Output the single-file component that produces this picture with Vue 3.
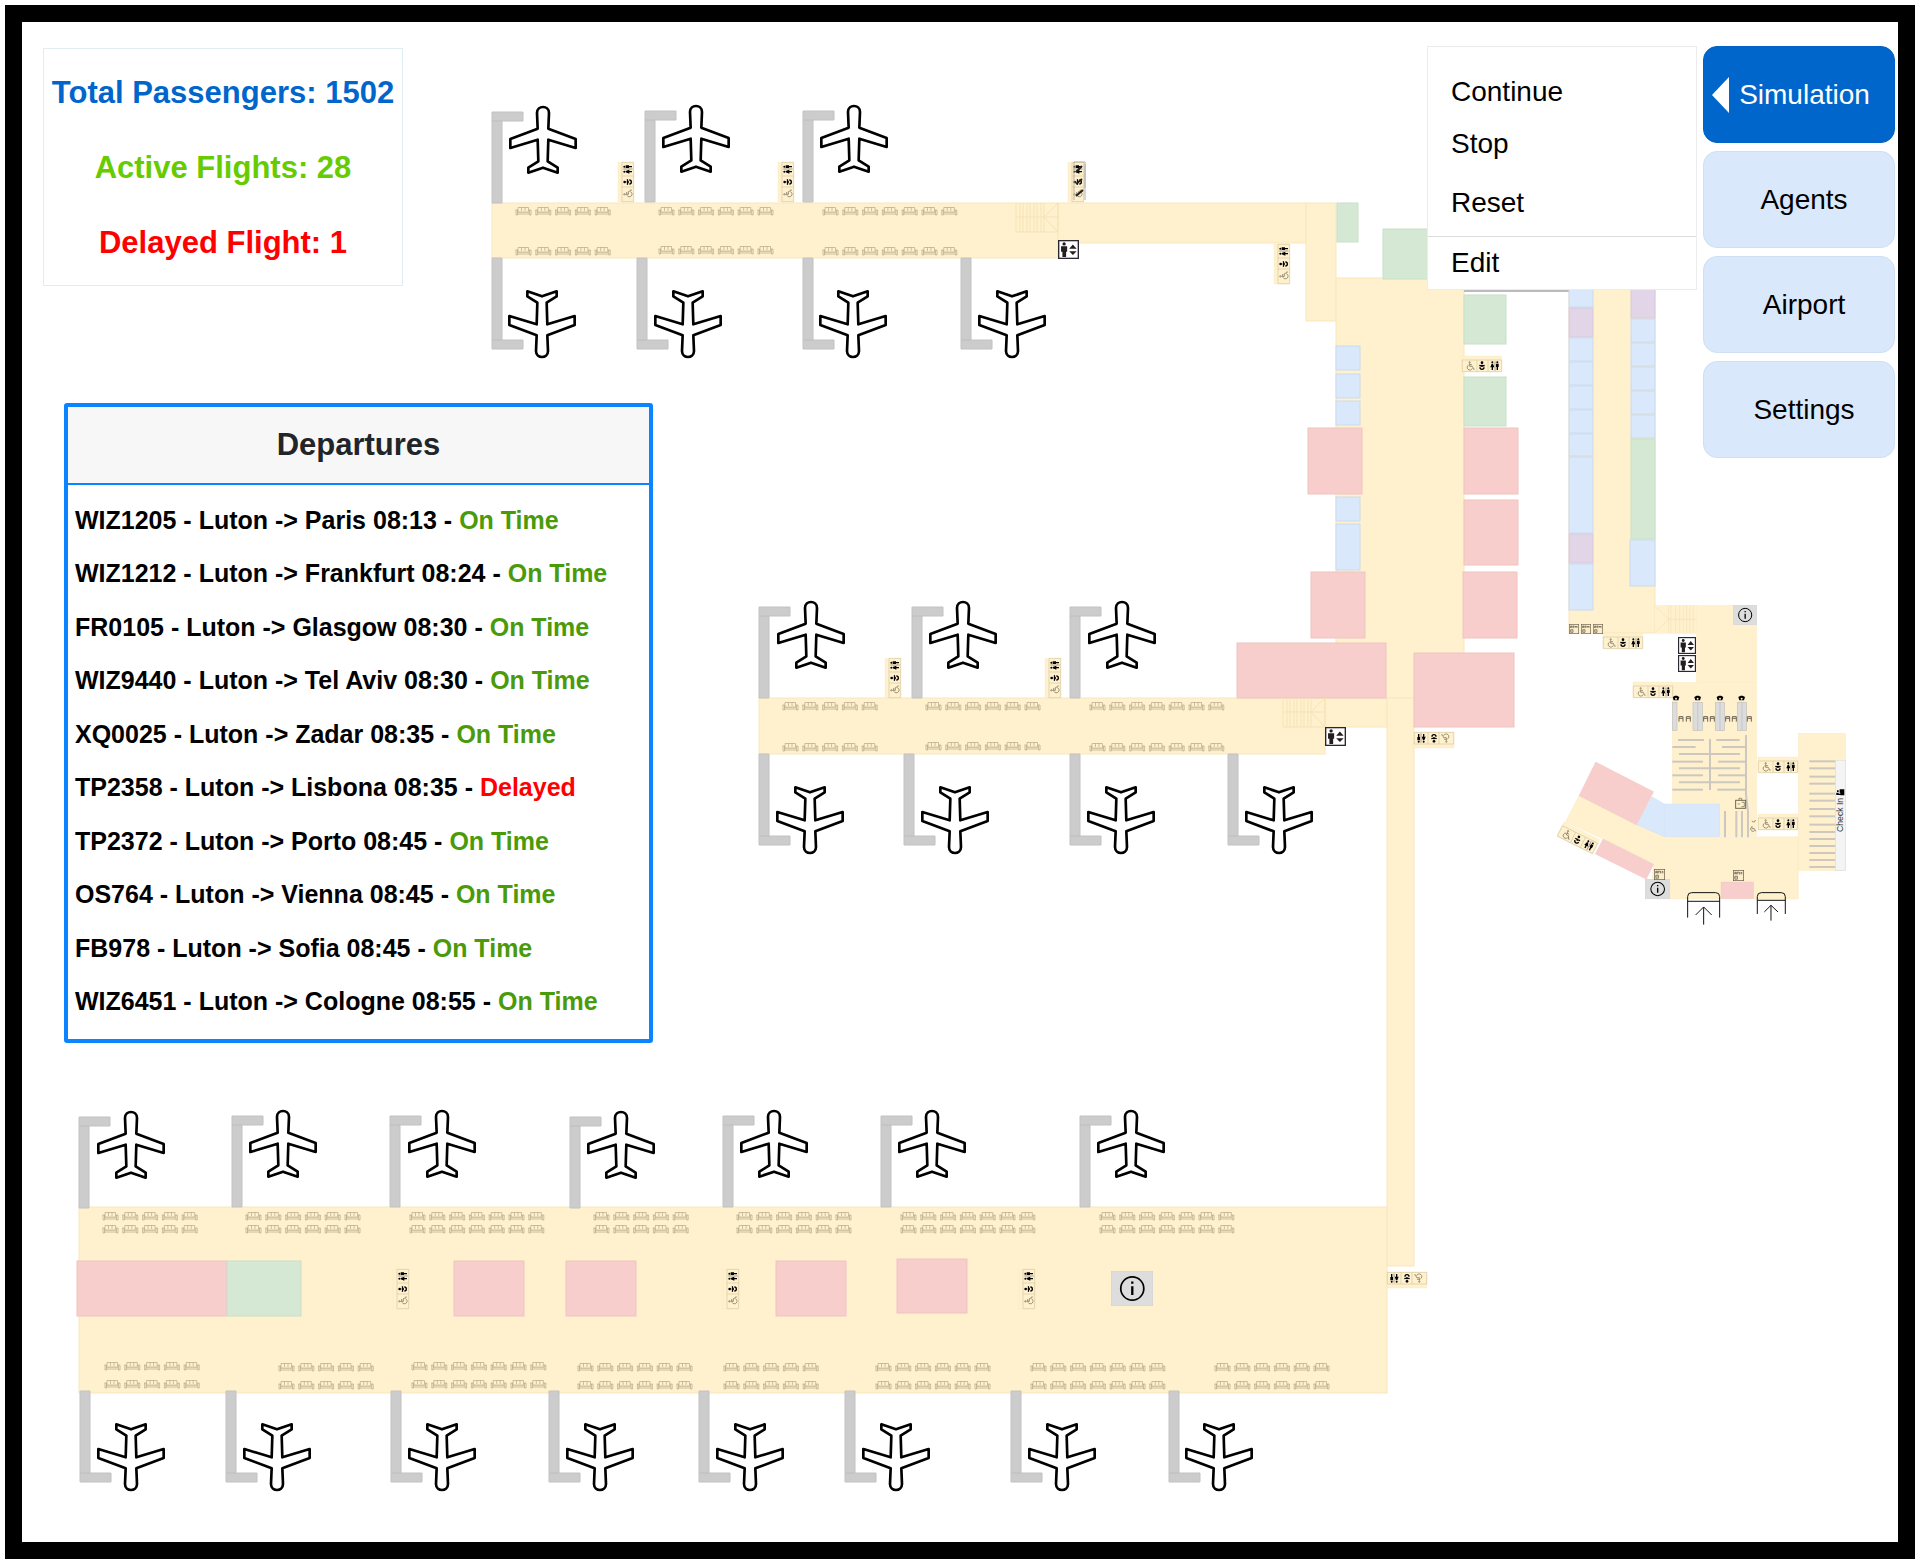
<script setup>
import { ref } from 'vue'

const stats = [
  { text: 'Total Passengers: 1502', tone: 'blue' },
  { text: 'Active Flights: 28', tone: 'green' },
  { text: 'Delayed Flight: 1', tone: 'red' },
]

const departures = [
  { code: 'WIZ1205', to: 'Paris', time: '08:13', status: 'On Time' },
  { code: 'WIZ1212', to: 'Frankfurt', time: '08:24', status: 'On Time' },
  { code: 'FR0105', to: 'Glasgow', time: '08:30', status: 'On Time' },
  { code: 'WIZ9440', to: 'Tel Aviv', time: '08:30', status: 'On Time' },
  { code: 'XQ0025', to: 'Zadar', time: '08:35', status: 'On Time' },
  { code: 'TP2358', to: 'Lisbona', time: '08:35', status: 'Delayed' },
  { code: 'TP2372', to: 'Porto', time: '08:45', status: 'On Time' },
  { code: 'OS764', to: 'Vienna', time: '08:45', status: 'On Time' },
  { code: 'FB978', to: 'Sofia', time: '08:45', status: 'On Time' },
  { code: 'WIZ6451', to: 'Cologne', time: '08:55', status: 'On Time' },
]

const sections = ['Simulation', 'Agents', 'Airport', 'Settings']
const active = ref('Simulation')

// Floor plan. Rectangles are [x, y, width, height, kind].
const halls = [
  [492, 203, 566, 55], [1058, 203, 248, 40], [1306, 203, 30, 118],
  [1336, 278, 128, 420], [759, 698, 566, 56], [1325, 698, 62, 29],
  [1387, 698, 27, 568], [79, 1207, 1308, 186], [1569, 287, 86, 346],
]

const rooms = [
  [1337, 203, 21, 39, 'g'], [1383, 229, 60, 50, 'g'],
  [77, 1261, 150, 55, 'p'], [227, 1261, 74, 55, 'g'], [454, 1261, 70, 55, 'p'],
  [566, 1261, 70, 55, 'p'], [776, 1261, 70, 55, 'p'], [897, 1259, 70, 54, 'p'],
  [1464, 295, 42, 49, 'g'], [1464, 377, 42, 49, 'g'],
  [1336, 346, 24, 24, 'b'], [1336, 374, 24, 24, 'b'], [1336, 401, 24, 24, 'b'],
  [1336, 497, 24, 24, 'b'], [1336, 524, 24, 46, 'b'],
  [1308, 428, 54, 66, 'p'], [1311, 572, 54, 66, 'p'], [1237, 643, 149, 55, 'p'],
  [1464, 428, 54, 66, 'p'], [1464, 500, 54, 65, 'p'], [1463, 572, 54, 66, 'p'],
  [1414, 653, 100, 74, 'p'],
  [1569, 287, 24, 20, 'b'], [1569, 308, 24, 29, 'v'], [1569, 338, 24, 23, 'b'],
  [1569, 362, 24, 23, 'b'], [1569, 386, 24, 23, 'b'], [1569, 410, 24, 23, 'b'],
  [1569, 434, 24, 22, 'b'], [1569, 457, 24, 76, 'b'], [1569, 534, 24, 29, 'v'],
  [1569, 564, 24, 46, 'b'],
  [1631, 287, 24, 31, 'v'], [1631, 319, 24, 23, 'b'], [1631, 343, 24, 23, 'b'],
  [1631, 367, 24, 23, 'b'], [1631, 391, 24, 23, 'b'], [1631, 415, 24, 23, 'b'],
  [1631, 439, 24, 100, 'g'], [1630, 540, 25, 46, 'b'],
]

// Gates above a pier: [x of the bridge, y where it meets the pier, x of the plane]
const gatesUp = [
  [492, 203, 543], [645, 202, 696], [803, 202, 854],
  [759, 698, 811], [912, 698, 963], [1070, 698, 1122],
  [79, 1208, 131], [232, 1207, 283], [390, 1207, 442], [570, 1208, 621],
  [723, 1207, 774], [881, 1207, 932], [1080, 1207, 1131],
]
const gatesDown = [
  [492, 258, 542], [637, 258, 688], [803, 258, 853], [961, 258, 1012],
  [759, 754, 810], [904, 754, 955], [1070, 754, 1121], [1228, 754, 1279],
  [80, 1391, 131], [226, 1391, 277], [391, 1391, 442], [549, 1391, 600],
  [699, 1391, 750], [845, 1391, 896], [1011, 1391, 1062], [1169, 1391, 1219],
]

// Rows of seats: [x, y, count]
const seatRows = [
  [515, 207, 5], [658, 207, 6], [822, 207, 7], [515, 247, 5], [658, 246, 6], [822, 247, 7],
  [782, 702, 5], [925, 702, 6], [1089, 702, 7], [782, 743, 5], [925, 742, 6], [1089, 743, 7],
  [102, 1212, 5], [245, 1212, 6], [409, 1212, 7], [593, 1212, 5], [736, 1212, 6], [900, 1212, 7], [1099, 1212, 7],
  [102, 1225, 5], [245, 1225, 6], [409, 1225, 7], [593, 1225, 5], [736, 1225, 6], [900, 1225, 7], [1099, 1225, 7],
  [104, 1362, 5], [278, 1363, 5], [411, 1362, 7], [577, 1363, 6], [723, 1363, 5], [875, 1363, 6], [1030, 1363, 7], [1214, 1363, 6],
  [104, 1380, 5], [278, 1381, 5], [411, 1380, 7], [577, 1381, 6], [723, 1381, 5], [875, 1381, 6], [1030, 1381, 7], [1214, 1381, 6],
]
const seats = seatRows.flatMap(([x, y, n]) =>
  Array.from({ length: n }, (_, i) => [x + i * 19.8, y]),
)

// Washroom strips: [x, y, rotation]
const washrooms = [
  [618, 202, -90], [778, 202, -90], [1068, 202, -90], [1274, 284, -90],
  [885, 698, -90], [1045, 698, -90], [393, 1309, -90], [723, 1309, -90], [1019, 1309, -90],
  [1462, 356, 0], [1603, 633, 0], [1633, 682, 0], [1758, 757, 0], [1758, 814, 0],
  [1454, 748, 180], [1427, 1288, 180], [1564, 822, 26.5],
]

const lifts = [[1058, 240, 21, 19], [1325, 727, 21, 19], [1678, 637, 18, 17], [1678, 655, 18, 17]]
const infos = [[1733, 605, 24, 20], [1645, 879, 25, 20], [1111, 1271, 42, 35]]
const atms = [[1569, 624, 10], [1581, 624, 10], [1593, 624, 10], [1654, 869, 11], [1733, 870, 11]]

const queues = [
  [414, 480, 492], [529, 480, 599], [397, 501, 467], [546, 501, 616], [417, 522, 600],
  [397, 545, 489], [534, 545, 616], [417, 565, 600], [397, 586, 489], [534, 586, 616],
  [417, 607, 600], [397, 629, 489], [532, 629, 616],
]
const desks = [544, 565, 590, 611, 641, 662, 687, 709, 734, 756, 777, 798, 819, 840, 861]
const scanners = [[397, 14], [459, 29], [526, 28], [592, 28]]
const officers = [408, 473, 540, 605]
const arches = [423, 445, 497, 517, 563, 583, 628]
</script>

<template>
  <main class="frame">
    <svg class="plan" viewBox="22 22 1876 1520" role="img" aria-label="Airport floor plan">
      <defs>
        <g id="plane">
          <path
            class="plane"
            d="M-18 21C-18 -3 18 -3 18 21L16 68L98 99V126L16 101L14 166L44 185V200L0 185L-44 200V185L-14 166L-16 101L-98 126V99L-16 68Z"
            transform="scale(.3333)"
          />
        </g>
        <g id="seat">
          <path class="seat-line" d="M3 5V0.5H13.500V5M6.500 0.500V4M10 0.500V4M2.500 5.500H14M2.500 7H14M0.500 3H2.500V8H1V3M14 3H16V8H14.500V3" />
          <rect class="seat-fill" x="3" y="4" width="11" height="2" />
        </g>
        <g id="washroom">
          <g transform="scale(.3333)">
            <rect class="hall" width="119" height="47" />
            <path class="cell" d="M1 12H119V47H1ZM45 12V47M78 12V47" />
            <g class="chair">
              <circle cx="23" cy="19" r="2" />
              <path d="M23 22V31H31L35 40L38 39M23 26H30M20 27A8 8 0 1 0 31 37" />
            </g>
            <circle cx="60" cy="20" r="4" />
            <path class="limbs" d="M52 28Q60 31 68 28M60 26V33M54 34Q54 40 60 40Q66 40 66 34" />
            <circle cx="91" cy="19" r="3" />
            <path d="M89 23H93L97 34H93V42H89V34H85Z" />
            <path class="cell dark" d="M99 16V44" />
            <circle cx="106" cy="19" r="3" />
            <path d="M102 23H110V33H108V42H104V33H102Z" />
          </g>
        </g>
        <symbol id="lift" viewBox="0 0 62 58" preserveAspectRatio="none">
          <rect x="2" y="2" width="58" height="54" fill="#fff" stroke="#2b2730" stroke-width="4" />
          <g fill="#231f20">
            <circle cx="18" cy="12" r="5" />
            <path d="M9 19H27V36H24V52H13V36H9ZM33 27L44 14L55 27ZM33 34H55L44 46Z" />
          </g>
        </symbol>
        <symbol id="info" viewBox="0 0 73 60" preserveAspectRatio="none">
          <rect width="73" height="60" fill="#ddd" stroke="#ccc" />
          <circle cx="37" cy="30" r="20" fill="none" stroke="#000" stroke-width="3" />
          <path d="M37 26V41M37 18V22" stroke="#000" stroke-width="4" />
        </symbol>
        <symbol id="atm" viewBox="0 0 30 30">
          <rect x="1" y="1" width="28" height="28" fill="#fdeecb" stroke="#6b6350" stroke-width="2" />
          <path d="M5 12V6H9V12M5 9H9M11 6H16M13 6V12M18 12V6L21 9L24 6V12M5 17H12V25H5ZM8 20V22" fill="none" stroke="#5a5345" stroke-width="2" />
        </symbol>
        <g id="stairs">
          <path class="step" d="M0 0V29M4 0V29M7 0V29M11 0V29M14 0V29M18 0V29M21 0V29M25 0V29M28 0V29M0 14H42M0 29H42M42 0L28 14L42 29V0" />
        </g>
      </defs>

      <rect v-for="(h, i) in halls" :key="'h' + i" class="hall" :x="h[0]" :y="h[1]" :width="h[2]" :height="h[3]" />
      <path d="M1464 291H1569" stroke="#bbb" stroke-width="2" />
      <rect v-for="(r, i) in rooms" :key="'r' + i" :class="['room', r[4]]" :x="r[0]" :y="r[1]" :width="r[2]" :height="r[3]" />

      <g v-for="(g, i) in gatesUp" :key="'u' + i">
        <path class="bridge" :d="`M${g[0]} ${g[1]}v-82h10v82zM${g[0]} ${g[1] - 82}v-9h31v9z`" />
        <use href="#plane" :transform="`translate(${g[2]} ${g[1] - 97})`" />
      </g>
      <g v-for="(g, i) in gatesDown" :key="'d' + i">
        <path class="bridge" :d="`M${g[0]} ${g[1]}v82h10v-82zM${g[0]} ${g[1] + 82}v9h31v-9z`" />
        <use href="#plane" :transform="`translate(${g[2]} ${g[1] + 100}) scale(1 -1)`" />
      </g>

      <use href="#stairs" transform="translate(1016 203)" />
      <use href="#stairs" transform="translate(1283 698)" />
      <use v-for="(s, i) in seats" :key="'s' + i" href="#seat" :transform="`translate(${s[0]} ${s[1]})`" />

      <!-- Security, arrivals hall and check-in, drawn on a grid three times finer -->
      <g transform="translate(1540 580) scale(.3333)">
        <rect class="hall" x="344" y="76" width="126" height="84" />
        <rect class="hall" x="469" y="76" width="181" height="231" />
        <rect class="hall" x="397" y="307" width="253" height="461" />
        <rect class="hall" x="775" y="460" width="142" height="412" />
        <path class="hall" d="M117 647L374 770H775V957H330L341 853L189 777L76 726Z" />
        <path class="step fine" d="M344 78L386 118L344 158M386 118H469M386 76V160M393 76V160M407 76V160M419 76V160M430 76V160M440 76V160M450 76V160M460 76V160" />
        <path class="room p" d="M167 546L341 635L290 735L117 647Z" />
        <path class="room p" d="M189 777L341 853L319 898L166 822Z" />
        <path class="room b" d="M336 650L373 672V770L290 734Z" />
        <rect class="room b" x="373" y="672" width="166" height="98" />
        <rect class="room p" x="543" y="906" width="98" height="50" />

        <g v-for="s in scanners" :key="s[0]">
          <rect :x="s[0]" y="367" :width="s[1]" height="85" fill="#dcdcdc" stroke="#c4c2bd" stroke-width="2" />
          <path v-if="s[1] > 20" :d="`M${s[0] + s[1] / 2} 367v85`" stroke="#bbb" stroke-width="2" />
        </g>
        <g v-for="o in officers" :key="'o' + o">
          <path :d="`M${o - 10} 351l7 -4h6l7 4l-3 10h-14z`" />
          <circle :cx="o" cy="356" r="3" fill="#fff1ce" />
        </g>
        <path v-for="a in arches" :key="'a' + a" class="arch" :d="`M${a - 6} 425v-15h12v15M${a - 6} 415h12`" />

        <path v-for="(q, i) in queues" :key="'q' + i" class="rail" :d="`M${q[0]} ${q[1]}H${q[2]}`" />
        <path class="rail" d="M510 477V630M618 465V645L624 693V772M555 693V772M589 693V772M606 693V772" />
        <path v-for="d in desks" :key="'k' + d" class="rail" :d="`M808 ${d}H887`" />

        <g class="chair">
          <rect x="587" y="661" width="30" height="24" stroke-width="3" />
          <path d="M593 672H600M605 667H613V680H604M597 661V655H605V661" stroke-width="2" />
          <path d="M636 738V746H643L647 754M634 742A6 6 0 1 0 644 752M636 722A5 5 0 1 0 646 720" />
        </g>

        <rect x="887" y="541" width="30" height="331" fill="#f4f4f4" stroke="#ddd" stroke-width="2" />
        <text class="check-in" transform="translate(909 756) rotate(-90)">Check In</text>
        <path d="M899 628H913V646H901V638H899ZM889 638H896V641H903V645H889ZM891 631H896V636H891Z" />

        <path class="door" d="M443 1013V950Q443 938 455 938H527Q539 938 539 950V1013M443 964H539M491 1034V982M467 1005L491 981L515 1005" />
        <path class="door" d="M652 1002V950Q652 938 664 938H724Q736 938 736 950V1002M652 961H736M693 1022V976M673 996L693 976L714 996" />
      </g>

      <use v-for="(w, i) in washrooms" :key="'w' + i" href="#washroom" :transform="`translate(${w[0]} ${w[1]}) rotate(${w[2]})`" />
      <g class="chair">
        <path d="M1074 200V162H1085V200M1085 164V188" stroke="#b9b0a0" stroke-width="1" />
        <path d="M1076 196L1083 190M1076 184L1082 179M1076 172L1082 166" stroke="#222" />
      </g>
      <use v-for="(l, i) in lifts" :key="'l' + i" href="#lift" :x="l[0]" :y="l[1]" :width="l[2]" :height="l[3]" />
      <use v-for="(n, i) in infos" :key="'i' + i" href="#info" :x="n[0]" :y="n[1]" :width="n[2]" :height="n[3]" />
      <use v-for="(a, i) in atms" :key="'t' + i" href="#atm" :x="a[0]" :y="a[1]" :width="a[2]" :height="a[2]" />
    </svg>

    <div class="panels">
      <div class="left">
        <section class="stats">
          <p v-for="s in stats" :key="s.text" :class="s.tone">{{ s.text }}</p>
        </section>
        <section class="departures">
          <h2>Departures</h2>
          <ul>
            <li v-for="d in departures" :key="d.code">
              {{ d.code }} - Luton -&gt; {{ d.to }} {{ d.time }} -
              <span :class="d.status === 'Delayed' ? 'late' : 'ok'">{{ d.status }}</span>
            </li>
          </ul>
        </section>
      </div>

      <div class="right">
        <div v-if="active === 'Simulation'" class="menu">
          <div class="group">
            <button type="button">Continue</button>
            <button type="button">Stop</button>
          </div>
          <div class="group">
            <button type="button">Reset</button>
          </div>
          <div class="group last">
            <button type="button">Edit</button>
          </div>
        </div>
        <nav class="tabs">
          <button
            v-for="s in sections"
            :key="s"
            type="button"
            :class="{ active: s === active }"
            @click="active = s"
          >
            <svg v-if="s === active" class="arrow" viewBox="0 0 17 36" aria-hidden="true">
              <path d="M17 0V36L0 18Z" />
            </svg>
            {{ s }}
          </button>
        </nav>
      </div>
    </div>
  </main>
</template>

<style>
body {
  margin: 0;
  background: #fff;
}
</style>

<style scoped>
.frame {
  display: grid;
  margin: 5px;
  border: 17px solid #000;
  background: #fff;
  font-family: "Liberation Sans", Arial, sans-serif;
  color: #000;
}
.frame > * {
  grid-area: 1 / 1;
}
.plan {
  display: block;
  width: 100%;
}
.hall {
  fill: #fff1ce;
  stroke: #f8e7bd;
  stroke-width: 1;
}
.room {
  stroke-width: 1;
}
.p {
  fill: #f7cecc;
  stroke: #f0c3c0;
}
.b {
  fill: #d9e8fb;
  stroke: #cbdaec;
}
.g {
  fill: #d5e8d4;
  stroke: #c9e0c7;
}
.v {
  fill: #e1d5e7;
  stroke: #d6c9dd;
}
.bridge {
  fill: #ccc;
  stroke: #c2c2c2;
  stroke-width: 1;
}
.plane {
  fill: #fff;
  stroke: #000;
  stroke-width: 8;
  stroke-linejoin: round;
}
.seat-line {
  fill: none;
  stroke: #a89c7c;
  stroke-width: 1;
  opacity: 0.6;
}
.seat-fill {
  fill: #d8cba4;
  opacity: 0.6;
}
.cell {
  fill: none;
  stroke: #d6c8a0;
  stroke-width: 2;
}
.dark {
  stroke: #777;
}
.chair {
  fill: none;
  stroke: #6d654f;
  stroke-width: 2;
}
.limbs {
  fill: none;
  stroke: #000;
  stroke-width: 4;
}
.step {
  fill: none;
  stroke: #f4e3b6;
  stroke-width: 1;
}
.fine {
  stroke-width: 2;
}
.rail {
  fill: none;
  stroke: #ccc8c0;
  stroke-width: 6;
}
.arch {
  fill: none;
  stroke: #6b6350;
  stroke-width: 3;
}
.door {
  fill: none;
  stroke: #111;
  stroke-width: 3;
}
.check-in {
  font-size: 26px;
  fill: #333;
}
.panels {
  display: flex;
  justify-content: space-between;
  align-items: flex-start;
  z-index: 1;
}
.left {
  padding: 26px 0 0 21px;
}
.stats {
  box-sizing: border-box;
  width: 360px;
  padding: 6px 0 5px;
  border: 1px solid #e0eef1;
  background: #fff;
  text-align: center;
  font-size: 31px;
  font-weight: bold;
  line-height: 75px;
  white-space: nowrap;
}
.stats p {
  margin: 0;
}
.blue {
  color: #0066cc;
}
.green {
  color: #66cc00;
}
.red {
  color: #ff0000;
}
.departures {
  display: flex;
  flex-direction: column;
  box-sizing: border-box;
  width: 589px;
  min-height: 640px;
  margin: 117px 0 0 21px;
  border: 4px solid #0a84ff;
  border-radius: 3px;
  background: #fff;
  font-weight: bold;
}
.departures h2 {
  margin: 0;
  border-bottom: 2px solid #0a84ff;
  background: #f7f7f7;
  color: #212529;
  text-align: center;
  font-size: 31px;
  line-height: 76px;
}
.departures ul {
  display: flex;
  flex: 1;
  flex-direction: column;
  justify-content: space-between;
  margin: 0;
  padding: 19px 0 22px 7px;
  list-style: none;
  font-size: 25px;
  line-height: 32px;
  white-space: nowrap;
}
.ok {
  color: #4a9a0a;
}
.late {
  color: #ff0000;
}
.right {
  display: flex;
  align-items: flex-start;
  gap: 6px;
  padding: 24px 3px 0 0;
}
button {
  border: 0;
  background: none;
  font: inherit;
  font-size: 28px;
  cursor: pointer;
}
.menu {
  box-sizing: border-box;
  width: 270px;
  padding-top: 19px;
  border: 1px solid #ececec;
  background: #fff;
}
.group {
  padding-bottom: 7px;
}
.group.last {
  padding: 0;
  border-top: 1px solid #dcdcdc;
}
.group button {
  display: block;
  width: 100%;
  padding: 0 23px;
  text-align: left;
  line-height: 52px;
}
.tabs {
  display: flex;
  flex-direction: column;
  gap: 8px;
}
.tabs button {
  display: flex;
  align-items: center;
  justify-content: center;
  gap: 10px;
  box-sizing: border-box;
  width: 192px;
  height: 97px;
  padding: 0 0 0 10px;
  border: 1px solid #d0dff4;
  border-radius: 14px;
  background: #dae8fc;
}
.tabs button.active {
  padding: 0 16px 0 0;
  border-color: #0062c4;
  background: #0066cc;
  color: #fff;
}
.arrow {
  width: 17px;
  height: 36px;
  fill: #fff;
}
</style>
